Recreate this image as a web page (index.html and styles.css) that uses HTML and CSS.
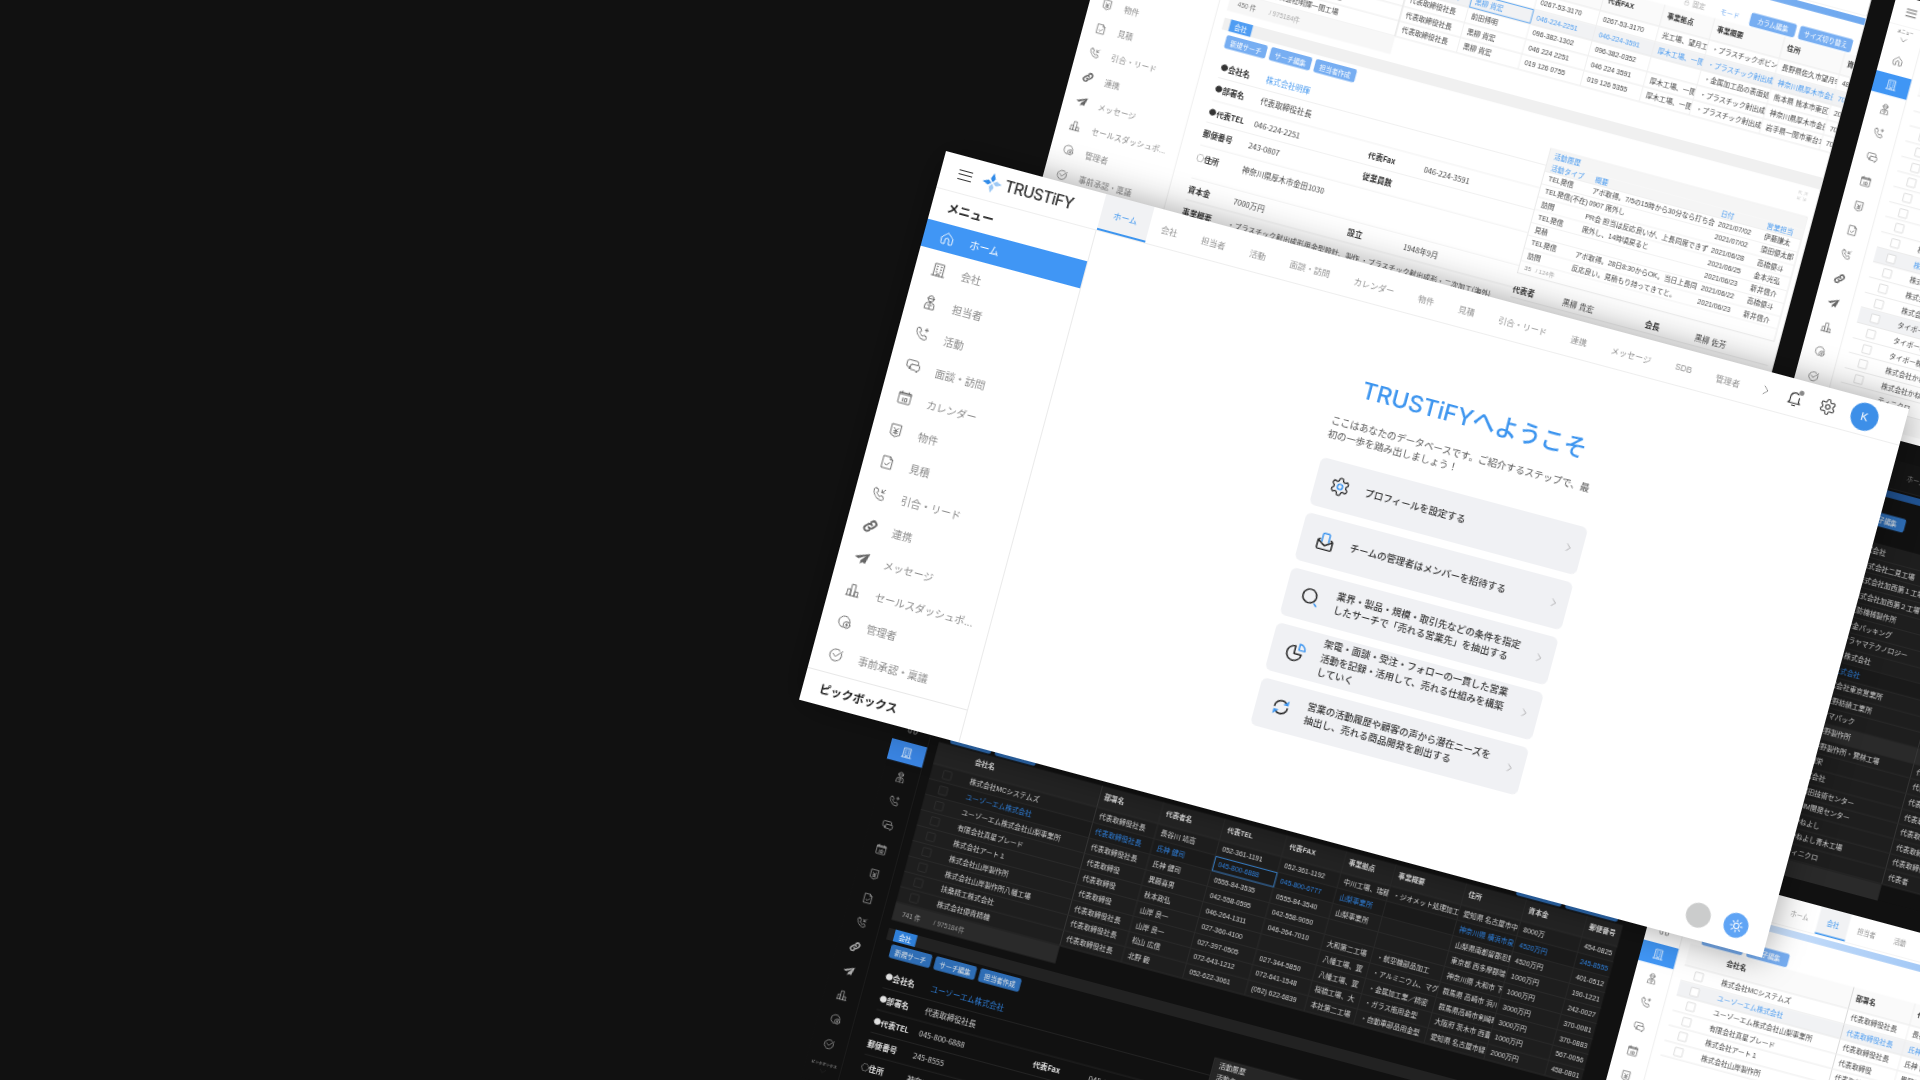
FILE: index.html
```html
<!DOCTYPE html>
<html lang="ja">
<head>
<meta charset="utf-8">
<title>TRUSTiFY</title>
<link rel="stylesheet" href="styles.css">
</head>
<body>
<svg class="defs" aria-hidden="true">
<symbol id="home" viewBox="0 0 24 24"><path d="M3.500 11.500 12 4l8.500 7.500V19a2 2 0 0 1-2 2H15v-6a3 3 0 0 0-6 0v6H5.500a2 2 0 0 1-2-2z"/></symbol>
<symbol id="bld" viewBox="0 0 24 24"><path d="M5 21V3h14v18M2.500 21h19M8 7h2M14 7h2M8 11h2M14 11h2M8 15h2M14 15h2M10 21v-3h4v3"/></symbol>
<symbol id="per" viewBox="0 0 24 24"><circle cx="12" cy="7" r="4.500"/><path d="M7 7h10M5 22v-4a5 5 0 0 1 5-5h4a5 5 0 0 1 5 5v4zM12 13v9M9 17h1M14 17h1"/></symbol>
<symbol id="tel" viewBox="0 0 24 24"><path d="M6 3.500 9 4l1.500 4-2 1.500c1 2.500 3 4.500 5.500 5.500l1.500-2 4 1.500.5 3c0 1.500-1 2.500-2.500 2.500C10 20 3.500 13.500 3.500 6 3.500 4.500 4.500 3.500 6 3.500zM18 2.500v5M15.500 5h5"/></symbol>
<symbol id="chat" viewBox="0 0 24 24"><path d="M7 15H5a3 3 0 0 1-3-3V7a3 3 0 0 1 3-3h11a3 3 0 0 1 3 3v2"/><path d="M7 15v3l2-2"/><path d="M10 10h10a2 2 0 0 1 2 2v4a2 2 0 0 1-2 2h-1v3l-3-3h-6a2 2 0 0 1-2-2v-4a2 2 0 0 1 2-2z"/></symbol>
<symbol id="cal" viewBox="0 0 24 24"><rect x="3" y="5" width="18" height="16" rx="1"/><path d="M3 7.500h18M3 5.500h18M7 3v3M17 3v3M9.500 13v5M13 13h3v5h-3z"/></symbol>
<symbol id="yen" viewBox="0 0 24 24"><path d="M5 3h14v15l-7 3.500L5 18zM8.500 8l3.500 4 3.500-4M12 12v5M9 13h6M9 16h6"/></symbol>
<symbol id="doc" viewBox="0 0 24 24"><path d="M5 3h10l4 4v14H5zM15 3v4h4M8.500 14l2.500 2.500 4.500-5"/></symbol>
<symbol id="tin" viewBox="0 0 24 24"><path d="M6 3.500 9 4l1.500 4-2 1.500c1 2.500 3 4.500 5.500 5.500l1.500-2 4 1.500.5 3c0 1.500-1 2.500-2.500 2.500C10 20 3.500 13.500 3.500 6 3.500 4.500 4.500 3.500 6 3.500zM20.500 3.500l-5 5M15.500 4.500v4h4"/></symbol>
<symbol id="lnk" viewBox="0 0 24 24"><path class="thick" d="M10 14a4 4 0 0 0 6 0l3-3a4 4 0 0 0-6-6l-1 1M14 10a4 4 0 0 0-6 0l-3 3a4 4 0 0 0 6 6l1-1"/></symbol>
<symbol id="pln" viewBox="0 0 24 24"><path class="solid" d="M23 3 1 11l6 2.500L18 7l-7 8.500V21l3.500-3.500 4 2z"/></symbol>
<symbol id="bar" viewBox="0 0 24 24"><path d="M2.500 21h19M4 21v-9h5v9M9 21V4h6v17M15 21v-7h5v7"/></symbol>
<symbol id="adm" viewBox="0 0 24 24"><path d="M20 11.500a8.500 8.500 0 1 0-9 9"/><circle cx="16" cy="16" r="5"/><path d="M16 13.500v5M14.500 16h3"/></symbol>
<symbol id="chk" viewBox="0 0 24 24"><path d="M20 8.500a9 9 0 1 1-3.500-3.800M7.500 11l4 4 9.500-10"/></symbol>
<symbol id="gear" viewBox="0 0 24 24"><path d="M12.220 2h-.44a2 2 0 0 0-2 2v.18a2 2 0 0 1-1 1.730l-.43.250a2 2 0 0 1-2 0l-.15-.08a2 2 0 0 0-2.730.730l-.22.380a2 2 0 0 0 .730 2.730l.15.100a2 2 0 0 1 1 1.720v.510a2 2 0 0 1-1 1.740l-.15.090a2 2 0 0 0-.730 2.730l.22.380a2 2 0 0 0 2.730.730l.15-.08a2 2 0 0 1 2 0l.43.250a2 2 0 0 1 1 1.730V20a2 2 0 0 0 2 2h.44a2 2 0 0 0 2-2v-.18a2 2 0 0 1 1-1.730l.43-.25a2 2 0 0 1 2 0l.15.08a2 2 0 0 0 2.730-.730l.22-.39a2 2 0 0 0-.730-2.730l-.15-.08a2 2 0 0 1-1-1.740v-.5a2 2 0 0 1 1-1.740l.15-.09a2 2 0 0 0 .730-2.730l-.22-.38a2 2 0 0 0-2.730-.730l-.15.08a2 2 0 0 1-2 0l-.43-.25a2 2 0 0 1-1-1.730V4a2 2 0 0 0-2-2z"/></symbol>
<symbol id="rt" viewBox="0 0 24 24"><path d="m8 4 8 8-8 8"/></symbol>
<symbol id="dn" viewBox="0 0 24 24"><path d="m3 7 9 10 9-10"/></symbol>
<symbol id="lock" viewBox="0 0 24 24"><rect x="5" y="11" width="14" height="10" rx="1"/><path d="M8 11V7a4 4 0 0 1 8 0v4"/></symbol>
<symbol id="exp" viewBox="0 0 24 24"><path d="M3 8V3h5M21 8V3h-5M3 16v5h5M21 16v5h-5M3 3l6 6M21 3l-6 6M3 21l6-6M21 21l-6-6"/></symbol>
</svg>

<main class="stage">

<!-- window A: upper, light, sidebar open -->
<section class="win small win-a">
  <div class="topbar"></div>
  <div class="body">
    <nav class="side">
      <div class="side-title">メニュー</div>
      <div class="nav on"><svg class="ic"><use href="#home"/></svg><span>ホーム</span></div>
      <div class="nav"><svg class="ic"><use href="#bld"/></svg><span>会社</span></div>
      <div class="nav"><svg class="ic"><use href="#per"/></svg><span>担当者</span></div>
      <div class="nav"><svg class="ic"><use href="#tel"/></svg><span>活動</span></div>
      <div class="nav"><svg class="ic"><use href="#chat"/></svg><span>面談・訪問</span></div>
      <div class="nav"><svg class="ic"><use href="#cal"/></svg><span>カレンダー</span></div>
      <div class="nav"><svg class="ic"><use href="#yen"/></svg><span>物件</span></div>
      <div class="nav"><svg class="ic"><use href="#doc"/></svg><span>見積</span></div>
      <div class="nav"><svg class="ic"><use href="#tin"/></svg><span>引合・リード</span></div>
      <div class="nav"><svg class="ic"><use href="#lnk"/></svg><span>連携</span></div>
      <div class="nav"><svg class="ic"><use href="#pln"/></svg><span>メッセージ</span></div>
      <div class="nav"><svg class="ic"><use href="#bar"/></svg><span>セールスダッシュボ...</span></div>
      <div class="nav"><svg class="ic"><use href="#adm"/></svg><span>管理者</span></div>
      <div class="nav"><svg class="ic"><use href="#chk"/></svg><span>事前承認・稟議</span></div>
    </nav>
    <div class="content">
      <div class="band"></div>
      <div class="toolbar">
        <span class="btn">親編集</span><span class="btn">親子編集</span>
        <span class="tool-note tool-lock"><svg class="ic-xs"><use href="#lock"/></svg>固定</span>
        <span class="tool-note tool-link">モード</span>
        <span class="btn btn-col">カラム編集</span><span class="btn btn-size">サイズ切り替え</span>
      </div>
      <div class="tbl">
        <div class="tr th"><span></span><span>会社名</span><span>部署名</span><span>代表者名</span><span>代表TEL</span><span>代表FAX</span><span>事業拠点</span><span>事業概要</span><span>住所</span><span>資本金</span><span>郵便番号</span></div>
        <div class="tr"><span><i class="box"></i></span><span>株式会社明輝望月工場</span><span>代表取締役</span><span>黒柳 貴宏</span><span>0267-53-3170</span><span>0267-53-3170</span><span>光工場、望月工</span><span>・プラスチックボビン</span><span>長野県佐久市望月9</span><span>4800万円</span><span>384-2202</span></div>
        <div class="tr sel"><span><i class="box"></i></span><span>株式会社明輝</span><span>代表取締役社長</span><span class="cell-on">黒柳 貴宏</span><span>046-224-2251</span><span>046-224-3591</span><span>厚木工場、一関</span><span>・プラスチック射出成</span><span>神奈川県厚木市金田</span><span>7000万円</span><span>243-0807</span></div>
        <div class="tr"><span><i class="box"></i></span><span>株式会社明輝熊本工場</span><span>代表取締役社長</span><span>前田博明</span><span>096-382-1302</span><span>096-382-0352</span><span></span><span>・金属加工品の表面処</span><span>熊本県 熊本市東区</span><span>2000万円</span><span>862-0967</span></div>
        <div class="tr"><span><i class="box"></i></span><span>株式会社明輝厚木工場</span><span>代表取締役社長</span><span>黒柳 貴宏</span><span>046 224 2251</span><span>046 224 3591</span><span>厚木工場、一関</span><span>・プラスチック射出成</span><span>神奈川県厚木市金田</span><span>7000万円</span><span>243-0807</span></div>
        <div class="tr"><span><i class="box"></i></span><span>株式会社明輝一関工場</span><span>代表取締役社長</span><span>黒柳 貴宏</span><span>019 126 0755</span><span>019 126 5355</span><span>厚木工場、一関</span><span>・プラスチック射出成</span><span>岩手県一関市東台1</span><span>7000万円</span><span>021-0000</span></div>
      </div>
      <div class="foot">450 件<em>/ 975184件</em></div>
      <div class="dtabs"><span>会社</span></div>
      <div class="dbtns"><span class="btn">新規サーチ</span><span class="btn">サーチ編集</span><span class="btn">担当者作成</span><svg class="ic-exp"><use href="#exp"/></svg></div>
      <div class="detail">
        <div class="form">
          <div class="frow"><b>●会社名</b><a>株式会社明輝</a></div>
          <div class="frow"><b>●部署名</b><span>代表取締役社長</span></div>
          <div class="frow"><b>●代表TEL</b><span class="v1">046-224-2251</span><b class="l2">代表Fax</b><span>046-224-3591</span></div>
          <div class="frow"><b>郵便番号</b><span class="v1">243-0807</span><b class="l2">従業員数</b><span></span></div>
          <div class="frow tall"><b>○住所</b><span>神奈川県厚木市金田1030</span></div>
          <div class="frow"><b>資本金</b><span class="v1">7000万円</span><b class="l2">設立</b><span>1948年9月</span></div>
          <div class="frow"><b>事業概要</b><span class="long">・プラスチック射出成形用金型設計、製作 ・プラスチック射出成形・二次加工(海外)</span></div>
        </div>
        <div class="aside">
          <div class="act">
            <div class="act-title">活動履歴</div>
            <div class="ar ah"><span>活動タイプ</span><span>概要</span><span>日付</span><span>営業担当</span></div>
            <div class="ar"><span>TEL発信</span><span>アポ取得。7/5の15時から30分なら打ち合</span><span>2021/07/02</span><span>伊藤謙太</span></div>
            <div class="ar"><span>TEL発信(不在)</span><span>0907 席外し</span><span>2021/07/02</span><span>須田優太郎</span></div>
            <div class="ar"><span>訪問</span><span>PR会 担当は反応良いが、上長同席できず</span><span>2021/06/28</span><span>高橋優斗</span></div>
            <div class="ar"><span>TEL発信</span><span>席外し、14時頃戻ると</span><span>2021/06/25</span><span>金本光弘</span></div>
            <div class="ar"><span>見積</span><span></span><span>2021/06/23</span><span>新井信介</span></div>
            <div class="ar"><span>TEL発信</span><span>アポ取得。28日8:30からOK。当日上長同</span><span>2021/06/22</span><span>高橋優斗</span></div>
            <div class="ar"><span>訪問</span><span>反応良い。見積もり持ってきてと。</span><span>2021/06/23</span><span>新井信介</span></div>
            <div class="act-foot">35 <em>/ 124件</em></div>
          </div>
          <div class="boss"><b>代表者</b><span>黒柳 貴宏</span><b>会長</b><span>黒柳 佐芳</span></div>
        </div>
      </div>
    </div>
  </div>
</section>

<!-- window B: upper right, light, sidebar closed -->
<section class="win small mini win-b">
  <div class="topbar"><div class="brand"><i class="burger"></i></div></div>
  <div class="body">
    <nav class="side">
      <div class="side-title"><small>メニュー</small><svg class="ic-dn"><use href="#dn"/></svg></div>
      <div class="nav"><svg class="ic"><use href="#home"/></svg></div>
      <div class="nav on"><svg class="ic"><use href="#bld"/></svg></div>
      <div class="nav"><svg class="ic"><use href="#per"/></svg></div>
      <div class="nav"><svg class="ic"><use href="#tel"/></svg></div>
      <div class="nav"><svg class="ic"><use href="#chat"/></svg></div>
      <div class="nav"><svg class="ic"><use href="#cal"/></svg></div>
      <div class="nav"><svg class="ic"><use href="#yen"/></svg></div>
      <div class="nav"><svg class="ic"><use href="#doc"/></svg></div>
      <div class="nav"><svg class="ic"><use href="#tin"/></svg></div>
      <div class="nav"><svg class="ic"><use href="#lnk"/></svg></div>
      <div class="nav"><svg class="ic"><use href="#pln"/></svg></div>
      <div class="nav"><svg class="ic"><use href="#bar"/></svg></div>
      <div class="nav"><svg class="ic"><use href="#adm"/></svg></div>
      <div class="nav"><svg class="ic"><use href="#chk"/></svg></div>
    </nav>
    <div class="content">
      <div class="band"></div>
      <div class="toolbar"></div>
      <div class="tbl tall-rows">
        <div class="tr th"><span></span><span>会社名</span></div>
        <div class="tr"><span><i class="box"></i></span><span>株式会社青山</span></div>
        <div class="tr"><span><i class="box"></i></span><span>株式会社赤坂</span></div>
        <div class="tr"><span><i class="box"></i></span><span>株式会社石田</span></div>
        <div class="tr"><span><i class="box"></i></span><span>株式会社上田</span></div>
        <div class="tr"><span><i class="box"></i></span><span>株式会社岡本</span></div>
        <div class="tr"><span><i class="box"></i></span><span>株式会社川口</span></div>
        <div class="tr"><span><i class="box"></i></span><span>株式会社木村</span></div>
        <div class="tr"><span><i class="box"></i></span><span>株式会社工藤</span></div>
        <div class="tr"><span><i class="box"></i></span><span>株式会社小松</span></div>
        <div class="tr"><span><i class="box"></i></span><span>株式会社佐野</span></div>
        <div class="tr sel"><span><i class="box"></i></span><span>株式会社高田</span></div>
        <div class="tr"><span><i class="box"></i></span><span>株式会社千葉</span></div>
        <div class="tr"><span><i class="box"></i></span><span>株式会社土屋</span></div>
        <div class="tr"><span><i class="box"></i></span><span>株式会社中村</span></div>
        <div class="tr alt"><span><i class="box"></i></span><span>タイポー株式会社</span></div>
        <div class="tr"><span><i class="box"></i></span><span>タイポー株式会社</span></div>
        <div class="tr"><span><i class="box"></i></span><span>タイポー株式会社</span></div>
        <div class="tr"><span><i class="box"></i></span><span>株式会社かね</span></div>
        <div class="tr"><span><i class="box"></i></span><span>株式会社かね</span></div>
        <div class="tr"><span></span><span>ティニクロ</span></div>
      </div>
      <div class="foot">件</div>
    </div>
  </div>
</section>

<!-- window C: right, dark, sidebar closed -->
<section class="win small mini dark win-c">
  <div class="topbar">
    <div class="brand"></div>
    <div class="tabs"><span class="tab">ホーム</span><span class="tab">会社</span><span class="tab">担当者</span></div>
  </div>
  <div class="body">
    <nav class="side"></nav>
    <div class="content">
      <div class="band"></div>
      <div class="toolbar"><span class="btn">親編集</span><span class="btn">親子編集</span></div>
      <div class="tbl no-head">
        <div class="tr"><span></span><span>旭化成株式会社</span></div>
        <div class="tr"><span></span><span>三和製作株式会社二見工場</span><span>代表取締役</span></div>
        <div class="tr"><span></span><span>三和製作株式会社加西第１工場</span><span>代表取締役</span></div>
        <div class="tr"><span></span><span>三和製作株式会社加西第２工場</span><span>代表取締役</span></div>
        <div class="tr"><span></span><span>株式会社三防機械製作所</span><span>代表取締役社長</span></div>
        <div class="tr"><span></span><span>株式会社合金パッキング</span><span>代表取締役社長</span></div>
        <div class="tr"><span></span><span>株式会社ツラヤマテクノロジー</span><span>代表取締役</span></div>
        <div class="tr"><span></span><span>株式会社ト株式会社</span><span>代表取締役</span></div>
        <div class="tr sel"><span></span><span>株式会社大式会社</span><span>代表取締役</span></div>
        <div class="tr"><span></span><span>株式会社式会社東京営業所</span><span>代表取締役</span></div>
        <div class="tr"><span></span><span>株式会社上野紡績工業所</span><span>代表取締役</span></div>
        <div class="tr"><span></span><span>株式会社ヤマパック</span><span>代表取締役</span></div>
        <div class="tr alt"><span></span><span>株式会社谷野製作所</span><span>代表取締役</span></div>
        <div class="tr"><span></span><span>株式会社谷野製作所・鷺林工場</span><span>代表</span></div>
        <div class="tr"><span></span><span>株式会社田栄</span><span>代表</span></div>
        <div class="tr"><span></span><span>株式会社式会社</span><span>代表取締役</span></div>
        <div class="tr"><span></span><span>株式会社都田技術センター</span><span>代表取締役</span></div>
        <div class="tr"><span></span><span>株式会社MIM開発センター</span><span>代表取締役</span></div>
        <div class="tr"><span></span><span>株式会社かねよし</span><span>代表取締役</span></div>
        <div class="tr"><span></span><span>株式会社かねよし青木工場</span><span>代表取締役</span></div>
        <div class="tr"><span></span><span>株式会社ティニクロ</span><span>代表者</span></div>
      </div>
      <div class="foot foot-c">1 件</div>
    </div>
  </div>
</section>

<!-- window D: lower, dark, sidebar closed -->
<section class="win small mini dark win-d">
  <div class="topbar"></div>
  <div class="body">
    <nav class="side">
      <div class="side-title"></div>
      <div class="nav"><svg class="ic"><use href="#home"/></svg></div>
      <div class="nav on"><svg class="ic"><use href="#bld"/></svg></div>
      <div class="nav"><svg class="ic"><use href="#per"/></svg></div>
      <div class="nav"><svg class="ic"><use href="#tel"/></svg></div>
      <div class="nav"><svg class="ic"><use href="#chat"/></svg></div>
      <div class="nav"><svg class="ic"><use href="#cal"/></svg></div>
      <div class="nav"><svg class="ic"><use href="#yen"/></svg></div>
      <div class="nav"><svg class="ic"><use href="#doc"/></svg></div>
      <div class="nav"><svg class="ic"><use href="#tin"/></svg></div>
      <div class="nav"><svg class="ic"><use href="#lnk"/></svg></div>
      <div class="nav"><svg class="ic"><use href="#pln"/></svg></div>
      <div class="nav"><svg class="ic"><use href="#bar"/></svg></div>
      <div class="nav"><svg class="ic"><use href="#adm"/></svg></div>
      <div class="nav"><svg class="ic"><use href="#chk"/></svg></div>
      <div class="mini-pick"><small>ピックボックス</small><svg class="ic-dn"><use href="#dn"/></svg></div>
    </nav>
    <div class="content">
      <div class="band"></div>
      <div class="toolbar">
        <span class="btn">親編集</span><span class="btn">親子編集</span>
        <span class="btn btn-col">カラム編集</span><span class="btn btn-size">サイズ切り替え</span>
      </div>
      <div class="tbl">
        <div class="tr th"><span></span><span>会社名</span><span>部署名</span><span>代表者名</span><span>代表TEL</span><span>代表FAX</span><span>事業拠点</span><span>事業概要</span><span>住所</span><span>資本金</span><span>郵便番号</span></div>
        <div class="tr"><span><i class="box"></i></span><span>株式会社MCシステムズ</span><span>代表取締役社長</span><span>長谷川 靖高</span><span>052-361-1191</span><span>052-361-1192</span><span>中川工場、瑞穂</span><span>・ジオメット処理加工</span><span>愛知県 名古屋市中</span><span>8000万</span><span>454-0825</span></div>
        <div class="tr sel"><span><i class="box"></i></span><span>ユーゾーエム株式会社</span><span>代表取締役社長</span><span>氏神 健司</span><span class="cell-on">045-800-6888</span><span>045-800-6777</span><span>山梨事業所</span><span></span><span>神奈川県 横浜市泉</span><span>4520万円</span><span>245-8555</span></div>
        <div class="tr"><span><i class="box"></i></span><span>ユーゾーエム株式会社山梨事業所</span><span>代表取締役社長</span><span>氏神 健司</span><span>0555-84-3535</span><span>0555-84-3540</span><span>山梨事業所</span><span></span><span>山梨県南都留郡忍野</span><span>4520万円</span><span>401-0512</span></div>
        <div class="tr"><span><i class="box"></i></span><span>有限会社真星ブレード</span><span>代表取締役</span><span>異藤喜男</span><span>042-558-0595</span><span>042-558-9050</span><span></span><span></span><span>東京都 西多摩郡瑞穂</span><span>1000万円</span><span>190-1221</span></div>
        <div class="tr"><span><i class="box"></i></span><span>株式会社アート１</span><span>代表取締役</span><span>秋本政弘</span><span>046-264-1311</span><span>046-264-7010</span><span>大和第二工場</span><span>・航空機部品加工</span><span>神奈川県 大和市 下</span><span>1000万円</span><span>242-0027</span></div>
        <div class="tr"><span><i class="box"></i></span><span>株式会社山岸製作所</span><span>代表取締役</span><span>山岸 良一</span><span>027-360-4100</span><span></span><span>八幡工場、翼</span><span>・アルミニウム、マグ</span><span>群馬県 高崎市 浜川</span><span>3000万円</span><span>370-0081</span></div>
        <div class="tr"><span><i class="box"></i></span><span>株式会社山岸製作所八幡工場</span><span>代表取締役社長</span><span>山岸 良一</span><span>027-397-0505</span><span>027-344-5850</span><span>八幡工場、翼</span><span>・金属加工業／精密</span><span>群馬県高崎市剣崎町</span><span>3000万円</span><span>370-0883</span></div>
        <div class="tr"><span><i class="box"></i></span><span>扶桑精工株式会社</span><span>代表取締役社長</span><span>松山 広信</span><span>072-643-1212</span><span>072-641-1548</span><span>桜橋工場、大</span><span>・ガラス瓶用金型</span><span>大阪府 茨木市 西豊</span><span>1000万円</span><span>567-0056</span></div>
        <div class="tr"><span><i class="box"></i></span><span>株式会社優貴精機</span><span>代表取締役社長</span><span>北野 毅</span><span>052-622-3061</span><span>(052) 622-6839</span><span>本社第二工場</span><span>・自動車部品用金型</span><span>愛知県 名古屋市緑</span><span>2000万円</span><span>458-0801</span></div>
      </div>
      <div class="foot">741 件<em>/ 975184件</em></div>
      <div class="dtabs"><span>会社</span></div>
      <div class="dbtns"><span class="btn">新規サーチ</span><span class="btn">サーチ編集</span><span class="btn">担当者作成</span></div>
      <div class="detail">
        <div class="form">
          <div class="frow"><b>●会社名</b><a>ユーゾーエム株式会社</a></div>
          <div class="frow"><b>●部署名</b><span>代表取締役社長</span></div>
          <div class="frow"><b>●代表TEL</b><span class="v1">045-800-6888</span><b class="l2">代表Fax</b><span>045-800-6777</span></div>
          <div class="frow"><b>郵便番号</b><span class="v1">245-8555</span><b class="l2">従業員数</b><span></span></div>
          <div class="frow tall"><b>○住所</b><span>神奈川県横浜市泉区</span></div>
        </div>
        <div class="aside">
          <div class="act">
            <div class="act-title">活動履歴</div>
            <div class="ar ah"><span>活動タイプ</span><span>概要</span><span>日付</span><span>営業担当</span></div>
          </div>
        </div>
      </div>
    </div>
  </div>
</section>

<!-- window E: lower right, light, sidebar closed -->
<section class="win small mini win-e">
  <div class="topbar">
    <div class="brand"></div>
    <div class="tabs"><span class="tab">ホーム</span><span class="tab on">会社</span><span class="tab">担当者</span><span class="tab">活動</span><span class="tab">面談・訪問</span></div>
  </div>
  <div class="body">
    <nav class="side">
      <div class="side-title"></div>
      <div class="nav"><svg class="ic"><use href="#home"/></svg></div>
      <div class="nav on"><svg class="ic"><use href="#bld"/></svg></div>
      <div class="nav"><svg class="ic"><use href="#per"/></svg></div>
      <div class="nav"><svg class="ic"><use href="#tel"/></svg></div>
      <div class="nav"><svg class="ic"><use href="#chat"/></svg></div>
      <div class="nav"><svg class="ic"><use href="#cal"/></svg></div>
      <div class="nav"><svg class="ic"><use href="#yen"/></svg></div>
      <div class="nav"><svg class="ic"><use href="#doc"/></svg></div>
    </nav>
    <div class="content">
      <div class="band"></div>
      <div class="toolbar"><span class="btn">親編集</span><span class="btn">親子編集</span></div>
      <div class="tbl">
        <div class="tr th"><span></span><span>会社名</span><span>部署名</span><span>代表者名</span></div>
        <div class="tr"><span><i class="box"></i></span><span>株式会社MCシステムズ</span><span>代表取締役社長</span><span>長谷川 靖高</span></div>
        <div class="tr sel"><span><i class="box"></i></span><span>ユーゾーエム株式会社</span><span>代表取締役社長</span><span>氏神 健司</span></div>
        <div class="tr"><span><i class="box"></i></span><span>ユーゾーエム株式会社山梨事業所</span><span>代表取締役社長</span><span>氏神 健司</span></div>
        <div class="tr"><span><i class="box"></i></span><span>有限会社真星ブレード</span><span>代表取締役</span><span>異藤喜男</span></div>
        <div class="tr"><span><i class="box"></i></span><span>株式会社アート１</span><span>代表取締役</span><span>秋本政弘</span></div>
        <div class="tr"><span><i class="box"></i></span><span>株式会社山岸製作所</span><span>代表取締役</span><span>山岸 良一</span></div>
      </div>
    </div>
  </div>
</section>

<!-- main window, on top -->
<section class="win win-main">
  <div class="topbar">
    <div class="brand">
      <i class="burger"></i>
      <svg class="logo" viewBox="0 0 24 24">
        <path class="lg-a" d="M12 0l3 7-3 4-3-4z"/><path class="lg-b" d="M24 12l-7 3-4-3 4-3z"/>
        <path class="lg-b" d="M12 24l-3-7 3-4 3 4z"/><path class="lg-a" d="M0 12l7-3 4 3-4 3z"/>
      </svg>
      <span class="wordmark">TRUSTiFY</span>
    </div>
    <div class="tabs">
      <span class="tab on">ホーム</span><span class="tab">会社</span><span class="tab">担当者</span><span class="tab">活動</span><span class="tab">面談・訪問</span><span class="tab">カレンダー</span><span class="tab">物件</span><span class="tab">見積</span><span class="tab">引合・リード</span><span class="tab">連携</span><span class="tab">メッセージ</span><span class="tab">SDB</span><span class="tab">管理者</span>
    </div>
    <div class="tools">
      <svg class="ic-rt"><use href="#rt"/></svg>
      <span class="bell"><svg viewBox="0 0 24 24"><path d="M6 17V11a6 6 0 0 1 10-4.500M18 11v6l2 2H4l2-2M10 22h4"/></svg><i></i></span>
      <svg class="ic-gear" viewBox="0 0 24 24"><use href="#gear"/><circle cx="12" cy="12" r="3"/></svg>
      <span class="avatar">K</span>
    </div>
  </div>
  <div class="body">
    <nav class="side">
      <div class="side-title">メニュー</div>
      <div class="nav on"><svg class="ic"><use href="#home"/></svg><span>ホーム</span></div>
      <div class="nav"><svg class="ic"><use href="#bld"/></svg><span>会社</span></div>
      <div class="nav"><svg class="ic"><use href="#per"/></svg><span>担当者</span></div>
      <div class="nav"><svg class="ic"><use href="#tel"/></svg><span>活動</span></div>
      <div class="nav"><svg class="ic"><use href="#chat"/></svg><span>面談・訪問</span></div>
      <div class="nav"><svg class="ic"><use href="#cal"/></svg><span>カレンダー</span></div>
      <div class="nav"><svg class="ic"><use href="#yen"/></svg><span>物件</span></div>
      <div class="nav"><svg class="ic"><use href="#doc"/></svg><span>見積</span></div>
      <div class="nav"><svg class="ic"><use href="#tin"/></svg><span>引合・リード</span></div>
      <div class="nav"><svg class="ic"><use href="#lnk"/></svg><span>連携</span></div>
      <div class="nav"><svg class="ic"><use href="#pln"/></svg><span>メッセージ</span></div>
      <div class="nav"><svg class="ic"><use href="#bar"/></svg><span>セールスダッシュボ...</span></div>
      <div class="nav"><svg class="ic"><use href="#adm"/></svg><span>管理者</span></div>
      <div class="nav"><svg class="ic"><use href="#chk"/></svg><span>事前承認・稟議</span></div>
      <div class="pick">ピックボックス</div>
    </nav>
    <div class="welcome">
      <h1>TRUSTiFYへようこそ</h1>
      <p>ここはあなたのデータベースです。ご紹介するステップで、最初の一歩を踏み出しましょう！</p>
      <div class="card">
        <svg class="cic" viewBox="0 0 24 24"><use href="#gear"/><circle class="blue-s" cx="12" cy="12" r="3"/></svg>
        <span>プロフィールを設定する</span><svg class="cchev"><use href="#rt"/></svg>
      </div>
      <div class="card">
        <svg class="cic" viewBox="0 0 24 24"><path d="M5.500 9.500 3.500 11v8.500a1.500 1.500 0 0 0 1.500 1.500h14a1.500 1.500 0 0 0 1.500-1.500V11l-2-1.500M3.500 11l8.500 5.500 8.500-5.500"/><path class="blue-s" d="M8 12V4a1.500 1.500 0 0 1 1.500-1.500h5A1.500 1.500 0 0 1 16 4v8"/></svg>
        <span>チームの管理者はメンバーを招待する</span><svg class="cchev"><use href="#rt"/></svg>
      </div>
      <div class="card">
        <svg class="cic" viewBox="0 0 24 24"><circle cx="11" cy="11" r="8"/><path class="blue-s" d="M18 18.500l2.500 2.500"/></svg>
        <span>業界・製品・規模・取引先などの条件を指定したサーチで「売れる営業先」を抽出する</span><svg class="cchev"><use href="#rt"/></svg>
      </div>
      <div class="card">
        <svg class="cic" viewBox="0 0 24 24"><path d="M10.500 5a8.500 8.500 0 1 0 8.500 9h-8.500z"/><path class="blue-s" d="M15 2v7h7a7 7 0 0 0-7-7z"/></svg>
        <span>架電・面談・受注・フォローの一貫した営業活動を記録・活用して、売れる仕組みを構築していく</span><svg class="cchev"><use href="#rt"/></svg>
      </div>
      <div class="card">
        <svg class="cic" viewBox="0 0 24 24"><path d="M4.500 12a7.500 7.500 0 0 1 13-5M19.500 12a7.500 7.500 0 0 1-13 5"/><path class="blue-f" d="M20 3v6h-6zM4 21v-6h6z"/></svg>
        <span>営業の活動履歴や顧客の声から潜在ニーズを抽出し、売れる商品開発を創出する</span><svg class="cchev"><use href="#rt"/></svg>
      </div>
    </div>
  </div>
  <i class="fab fab-gray"></i>
  <span class="fab fab-blue"><svg viewBox="0 0 24 24"><circle cx="12" cy="12" r="4"/><path d="M12 3v2.500M12 18.500V21M3 12h2.500M18.500 12H21M5.600 5.600l1.800 1.800M16.600 16.600l1.800 1.800M5.600 18.400l1.800-1.800M16.600 7.400l1.800-1.800"/></svg></span>
</section>

</main>
</body>
</html>
```

FILE: styles.css
```css
* { box-sizing: border-box; }
html, body { margin: 0; height: 100%; }
body {
  width: 1920px; height: 1080px; overflow: hidden; background: #111;
  font-family: "Liberation Sans", "Noto Sans CJK JP", sans-serif;
}
.defs { position: absolute; width: 0; height: 0; }
symbol path, symbol circle, symbol rect { fill: none; stroke: currentColor; stroke-width: 1.4; stroke-linecap: round; stroke-linejoin: round; }
symbol .thick { stroke-width: 3; }
symbol .solid { fill: currentColor; stroke: none; }

/* free canvas: windows tilted 15deg on a black desk */
.stage { position: absolute; left: 946.4px; top: 151.4px; width: 0; height: 0; transform: rotate(15deg); transform-origin: 0 0; filter: blur(.3px); }
.win {
  position: absolute; width: 997px; height: 568px; overflow: hidden; display: flex; flex-direction: column;
  background: #fff; color: #444;
}
.small { transform: scale(.757); transform-origin: 0 0; }
.win-a { left: 100px; top: -397px; }
.win-b { left: 878px; top: -397px; }
.win-c { left: 878px; top: 53px; }
.win-d { left: 100px; top: 503px; }
.win-e { left: 878px; top: 503px; }
.win-main { left: 0; top: 0; height: 568px; z-index: 2; box-shadow: 0 0 34px rgba(0,0,0,.38); }

/* top bar */
.topbar { height: 38px; flex: none; display: flex; align-items: stretch; border-bottom: 1px solid #eee; }
.brand { width: 166px; flex: none; display: flex; align-items: center; padding-left: 18px; }
.burger { width: 14px; height: 10px; border-top: 1px solid #333; border-bottom: 1px solid #333; position: relative; display: block; }
.burger::after { content: ""; position: absolute; left: 0; right: 0; top: 3.500px; border-top: 1px solid #333; }
.logo { width: 20px; height: 20px; margin-left: 11px; }
.lg-a { fill: #2f8ae8; }
.lg-b { fill: #9cc8f5; }
.wordmark { font-family: "Inter", "Liberation Sans", sans-serif; font-size: 15.500px; font-weight: 500; color: #333; margin-left: 3px; letter-spacing: -.6px; }
.tabs { display: flex; align-items: stretch; min-width: 0; }
.tab { padding: 0 12.500px; font-size: 8.300px; color: #8f8f8f; display: flex; align-items: center; white-space: nowrap; }
.tab.on { color: #3d95ef; background: #f1f2f4; border-bottom: 2px solid #3d95ef; }
.tools { margin-left: auto; padding-right: 27px; display: flex; align-items: center; gap: 15.500px; color: #333; }
.ic-rt { width: 12px; height: 14px; color: #555; }
.bell { width: 18px; height: 18px; position: relative; display: block; }
.bell svg { width: 18px; height: 18px; fill: none; stroke: #333; stroke-width: 1.5; stroke-linecap: round; stroke-linejoin: round; }
.bell i { position: absolute; right: 1px; top: 0; width: 5px; height: 5px; border-radius: 50%; background: #888; }
.ic-gear { width: 18px; height: 18px; }
.ic-gear circle { fill: none; stroke: currentColor; stroke-width: 1.4; }
.avatar { width: 28px; height: 28px; border-radius: 50%; background: #3d8fe8; color: #fff; font-size: 11px; display: flex; align-items: center; justify-content: center; }

/* body + sidebar */
.body { flex: 1; min-height: 0; display: flex; }
.side { width: 166px; flex: none; border-right: 1px solid #eaeaea; position: relative; background: #fff; }
.mini .side { width: 49px; }
.side-title { height: 32px; padding: 7px 0 0 16px; font-size: 12px; font-weight: 700; color: #222; }
.mini .side-title { padding: 0; display: flex; flex-direction: column; align-items: center; gap: 2px; }
.mini .side-title small { font-size: 5.500px; font-weight: 400; margin-top: 3px; }
.ic-dn { width: 12px; height: 10px; color: #333; }
.nav { height: 27.500px; margin-bottom: 5.650px; display: flex; align-items: center; padding-left: 16px; color: #666; font-size: 10.300px; white-space: nowrap; }
.nav span { color: #8a8a8a; }
.nav .ic { width: 16px; height: 16px; flex: none; margin-right: 15px; }
.nav.on { background: #4096f5; color: #fff; }
.nav.on span { color: #fff; }
.mini .nav.on { background: #4096f5; }
.pick { margin-top: 2px; border-top: 1px solid #e8e8e8; padding: 8px 0 0 17px; font-size: 11.500px; font-weight: 700; color: #222; }
.mini-pick { position: absolute; left: 0; top: 500px; width: 49px; display: flex; flex-direction: column; align-items: center; gap: 2px; color: #bbb; }
.mini-pick small { font-size: 5px; white-space: nowrap; }

/* data pane */
.content { flex: 1; min-width: 0; padding-left: 12px; overflow: hidden; background: #fff; }
.band { height: 9px; margin: 3px 0 0 0; background: linear-gradient(90deg, #dbe9fb, #8dbcf4 45%, #6ea8ef); }
.toolbar { height: 42px; display: flex; align-items: flex-end; padding: 0 9px 2px 14px; gap: 5px; }
.btn { height: 18px; padding: 0 4px; width: 56px; flex: none; border-radius: 3px; background: #77aef2; color: #fff; font-size: 8.500px; display: flex; align-items: center; justify-content: center; white-space: nowrap; }
.btn-col { margin-left: 10px; width: 62px; }
.btn-size { width: 72px; }
.tool-note { font-size: 8.500px; color: #aaa; height: 18px; display: flex; align-items: center; gap: 3px; white-space: nowrap; }
.tool-lock { margin-left: auto; }
.tool-link { color: #77aef2; margin-left: 16px; }
.toolbar > .btn-col:nth-child(3) { margin-left: auto; }
.ic-xs { width: 9px; height: 9px; }

.tr {
  display: grid; grid-template-columns: 47px 177px 84px 84px 85px 81px 68px 96px 82px 83px 70px;
  height: 20.500px; line-height: 20px; font-size: 9px; color: #444; border-bottom: 1px solid #e6e6e6;
}
.tr > span { padding: 0 5px 0 6px; white-space: nowrap; overflow: hidden; display: block; }
.tr > span:nth-child(2) { border-right: 1px solid #cfcfcf; }
.tr > span:nth-child(n+3) { border-right: 1px solid #ececec; }
.th { height: 30px; line-height: 26px; font-weight: 700; color: #333; background: #fafafa; }
.box { display: block; width: 12px; height: 12px; margin: 4px 0 0 10px; border: 1px solid #d4d4d4; border-radius: 1px; background: #fff; }
.sel { background: #f1f2f4; color: #4a9bf0; }
.alt { background: #f1f2f4; }
.cell-on { outline: 1px solid #3d95ef; outline-offset: -1px; }
.win-d .tr:not(.th) { height: 21px; }
.win-b .tr:not(.th), .win-c .tr:not(.th) { height: 20.670px; }
.no-head { margin-top: 20px; }
.foot { height: 24px; width: 224px; display: flex; align-items: center; gap: 18px; padding-left: 12px; font-size: 8.500px; color: #777; background: #f7f7f7; }
.foot em { font-style: normal; color: #aaa; }
.foot-c { margin-top: 0; }

/* detail */
.dtabs { height: 16px; margin-top: 10.500px; padding-left: 9px; background: #f0f0f0; display: flex; }
.dtabs span { width: 30px; background: #4f9df3; color: #fff; font-size: 8.500px; display: flex; align-items: center; justify-content: center; }
.dbtns { height: 18px; margin-top: 4.500px; display: flex; gap: 5px; padding-left: 9px; align-items: center; padding-right: 14px; }
.ic-exp { width: 14px; height: 14px; margin-left: auto; color: #ccc; }
.detail { display: flex; margin-top: 10px; }
.form { width: 460px; flex: none; padding-left: 12px; font-size: 10px; font-family: "Noto Sans CJK JP", sans-serif; }
.frow { height: 30.500px; display: flex; align-items: center; border-bottom: 1px solid #ececec; white-space: nowrap; }
.frow.tall { height: 45px; align-items: flex-start; padding-top: 8px; }
.frow b { width: 62px; flex: none; font-weight: 700; color: #333; }
.frow a { color: #4a9bf0; }
.frow .v1 { width: 156px; flex: none; }
.frow .l2 { width: 76px; }
.frow .long { overflow: visible; font-size: 9.500px; }
.aside { width: 352px; flex: none; margin-top: 6px; font-size: 9px; }
.act { border: 1px solid #e4e4e4; background: #fff; }
.act-title { height: 17px; line-height: 17px; padding-left: 7px; color: #4a9bf0; background: #f5f5f5; }
.ar { display: grid; grid-template-columns: 60px 172px 63px 1fr; height: 17.500px; line-height: 17px; padding-left: 7px; border-bottom: 1px solid #eee; white-space: nowrap; }
.ar > span { overflow: hidden; }
.ah { height: 14px; line-height: 14px; color: #4a9bf0; background: #f5f5f5; }
.act-foot { height: 16px; line-height: 16px; padding-left: 7px; color: #888; font-size: 8px; }
.act-foot em { font-style: normal; color: #aaa; margin-left: 4px; }
.boss { display: grid; grid-template-columns: 68px 113px 68px 1fr; height: 21px; line-height: 20px; margin-top: 12px; font-size: 10px; border-bottom: 1px solid #e8e8e8; white-space: nowrap; }
.boss b { color: #333; }

/* welcome */
.welcome { margin-left: 276px; width: 276px; }
.welcome h1 { margin: 70px -6px 0; font-size: 23.500px; line-height: 30px; font-weight: 500; text-align: center; color: #3d95ef; font-family: "Inter", "Noto Sans CJK JP", sans-serif; white-space: nowrap; }
.welcome p { margin: 15px 6px 16.500px 0; font-size: 9.600px; line-height: 14px; color: #555; }
.card { height: 49px; margin-bottom: 8px; border-radius: 6px; background: #f0f1f4; display: flex; align-items: center; padding: 0 9px 0 15px; font-size: 9.500px; line-height: 14.500px; font-weight: 500; color: #333; }
.card span { flex: 1; margin: 0 11px 0 15px; }
.cic { width: 21px; height: 21px; flex: none; color: #222; fill: none; stroke: #222; stroke-width: 1.7; stroke-linecap: round; stroke-linejoin: round; }
.cic .blue-s { stroke: #3d95ef; fill: none; }
.cic .blue-f { stroke: none; fill: #3d95ef; }
.cchev { width: 10px; height: 12px; flex: none; color: #777; }
.fab { position: absolute; top: 531px; width: 25px; height: 25px; border-radius: 50%; display: flex; align-items: center; justify-content: center; }
.fab-gray { left: 912px; background: #cbcccc; }
.fab-blue { left: 951px; background: #5fa4f5; }
.fab-blue svg { width: 16px; height: 16px; fill: none; stroke: #fff; stroke-width: 1.6; stroke-linecap: round; }

/* dark theme */
.dark { background: #111; color: #cfcfcf; }
.dark .topbar { border-bottom: 1px solid #2a2a2a; background: #151515; }
.dark .side { background: #111; border-right: 1px solid #222; }
.dark .nav { color: #aaa; }
.dark .nav.on { background: #3a85e3; color: #fff; }
.dark .tab { color: #888; }
.dark .content { background: #111; }
.dark .band { background: linear-gradient(90deg, #1f4f8d, #2d69ad); }
.dark .btn { background: #2e6db5; color: #e6e6e6; }
.dark .tbl { background: #1e1e1e; }
.dark .tr { color: #d4d4d4; border-bottom: 1px solid #2e2e2e; }
.dark .tr > span:nth-child(2) { border-right-color: #3c3c3c; }
.dark .tr > span:nth-child(n+3) { border-right-color: #2d2d2d; }
.dark .th { background: #242424; color: #ddd; }
.dark .box { background: #1e1e1e; border-color: #343434; }
.dark .sel { background: #1a1a1a; color: #2f80dd; }
.dark .alt { background: #2a2a2a; }
.dark .foot { background: #2a2a2a; color: #aaa; }
.dark .foot em { color: #999; }
.dark .dtabs { background: #222; }
.dark .dtabs span { background: #2f7fd8; }
.dark .frow { border-bottom-color: #2a2a2a; }
.dark .frow b { color: #e0e0e0; }
.dark .frow a { color: #2f80dd; }
.dark .act { background: #262626; border-color: #333; }
.dark .act-title, .dark .ah { background: #262626; color: #ddd; }
.dark .ar { border-bottom-color: #333; }
.dark .tool-note { color: #777; }
```
